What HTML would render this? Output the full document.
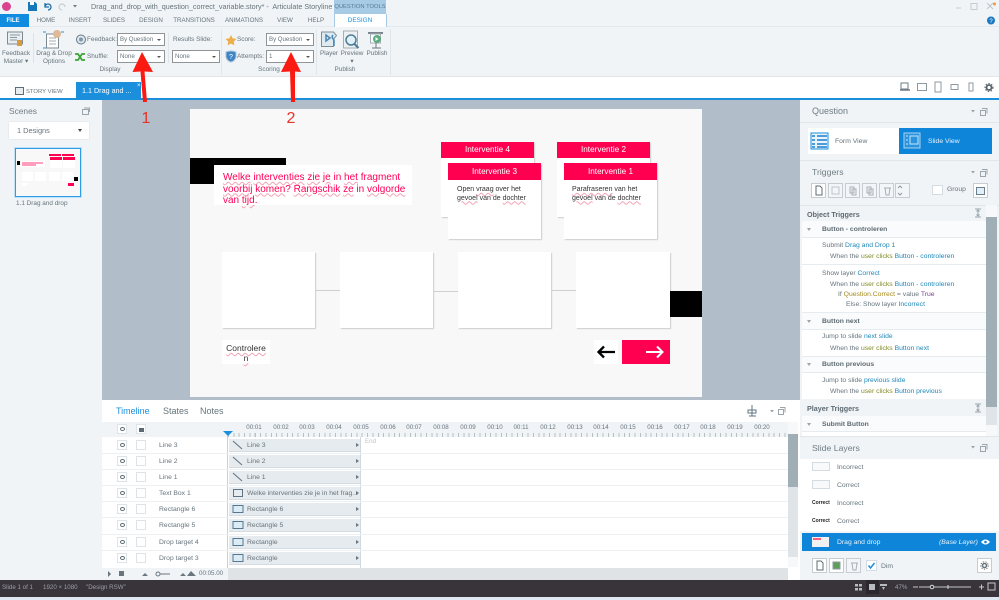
<!DOCTYPE html>
<html><head><meta charset="utf-8"><title>Storyline</title>
<style>
html,body{margin:0;padding:0;width:999px;height:600px;overflow:hidden;background:#fff}
#r{position:relative;width:999px;height:600px;overflow:hidden;font-family:"Liberation Sans",sans-serif;color:#66747c;filter:blur(.3px)}
#r div,#r span.a,#r svg{position:absolute}
.t{position:absolute;white-space:nowrap;line-height:10px;height:10px;font-size:6.8px}
.t:not([style*="font-size"]){margin-top:1px}
.c{transform:translateX(-50%)}
#r .h{font-size:8.7px;color:#6f7d85;margin-top:0}
.b{font-weight:bold;color:#5d6a72}
.dd{background:#fff;border:1px solid #8f9497;box-sizing:border-box;height:13px;width:48px}
.dd:after{content:"";position:absolute;right:3px;top:5px;border:2px solid transparent;border-top:2.5px solid #555}
i{font-style:normal;color:#1e88b8}
u{text-decoration:none;color:#7f8a22}
.card{background:#fff;box-shadow:1px 1px 1px #ccc;width:93px}
.pk{background:#ff0050;color:#fff;font-size:8.2px;text-align:center;height:16px;line-height:16px}
.dt{background:#fff;box-shadow:1px 1px 1px #ccc;top:252px;height:76px;width:93px}
.sq{text-decoration:underline wavy #f2a3b4;text-decoration-thickness:.5px;text-underline-offset:1px}
.ln{background:#e6ebef;height:1px;left:802px;width:184px}
.eye{left:117px;width:10px;height:10px;background:#fff;border:1px solid #dde3e7;box-sizing:border-box}
.eye:after{content:"";position:absolute;left:1.5px;top:2px;width:3px;height:2px;border:1.2px solid #5b6a72;border-radius:50%}
.lk{left:136px;width:10px;height:10px;background:#fff;border:1px solid #dde3e7;box-sizing:border-box}
.bar{left:229px;width:131px;height:13px;background:#e6ebef;border-bottom:1px solid #d5dce1;box-sizing:border-box}
.rl{left:102px;width:686px;height:1px;background:#eef1f3}
.tb{width:15px;height:15px;background:#f3f6f8;border:1px solid #c6ccd0;box-sizing:border-box;top:183px}
.sp{background:#f0f4f7}
</style></head><body><div id="r">

<!-- title bar + ribbon -->
<div style="left:0;top:0;width:999px;height:76px;background:#f0f4f7"></div>
<div style="left:0;top:26px;width:999px;height:1px;background:#e4e9ed"></div>
<div style="left:0;top:76px;width:999px;height:1px;background:#e1e6ea"></div>
<div style="left:0;top:77px;width:999px;height:21px;background:#fff"></div>
<div style="left:0;top:98px;width:999px;height:2px;background:#1b8fdb"></div>

<div style="left:2px;top:2px;width:9px;height:9px;border-radius:50%;background:#d9438f"></div>
<svg style="left:27px;top:1px" width="50" height="11" viewBox="0 0 50 11"><path d="M1 1h7l2 2v7H1z" fill="#1877b8"/><rect x="3" y="1" width="4" height="3" fill="#fff"/><path d="M18 6a3 3 0 1 1 3 3M18 2v4h4" fill="none" stroke="#1d6fa8" stroke-width="1.3"/><path d="M38 6a3 3 0 1 0-3 3" fill="none" stroke="#c4ccd2" stroke-width="1.2"/><path d="M46 4h4l-2 2.5z" fill="#777"/></svg>
<div class="t" style="left:91px;top:2px;font-size:7.2px">Drag_and_drop_with_question_correct_variable.story* -&nbsp; Articulate Storyline&nbsp; <span style="color:#d9438f">x64</span></div>
<div style="left:334px;top:0;width:52px;height:14px;background:#a8cbe5"></div>
<div class="t c" style="left:360px;top:2px;font-size:5.800px;color:#557a96">QUESTION TOOLS</div>
<div style="left:334px;top:14px;width:51px;height:13px;background:#fff;border:solid #a8cbe5;border-width:0 1px;"></div>
<div class="t c" style="left:360px;top:16px;color:#1b8fdb;font-size:6.4px">DESIGN</div>
<div style="left:0;top:14px;width:29px;height:13px;background:#0f8ce0"></div>
<div class="t c" style="left:13px;top:16px;color:#fff;font-weight:bold;font-size:6px">FILE</div>
<div class="t c" style="left:46px;top:16px;font-size:6.2px">HOME</div>
<div class="t c" style="left:80px;top:16px;font-size:6.2px">INSERT</div>
<div class="t c" style="left:114px;top:16px;font-size:6.2px">SLIDES</div>
<div class="t c" style="left:151px;top:16px;font-size:6.2px">DESIGN</div>
<div class="t c" style="left:194px;top:16px;font-size:6.2px">TRANSITIONS</div>
<div class="t c" style="left:244px;top:16px;font-size:6.2px">ANIMATIONS</div>
<div class="t c" style="left:285px;top:16px;font-size:6.2px">VIEW</div>
<div class="t c" style="left:316px;top:16px;font-size:6.2px">HELP</div>

<!-- window controls -->
<svg style="left:950px;top:0" width="49" height="28" viewBox="0 0 49 28"><path d="M6 8h5" stroke="#c4ccd2"/><rect x="21" y="3.5" width="6" height="6" fill="none" stroke="#c4ccd2"/><path d="M37 3l6 6M43 3l-6 6" stroke="#bcc5cb"/><circle cx="44.500" cy="4" r="1.500" fill="#f29a38"/><circle cx="41" cy="20.500" r="4" fill="#1c77c4"/><text x="41" y="23" font-size="6" fill="#fff" text-anchor="middle" font-family="Liberation Sans">?</text></svg>

<!-- ribbon groups -->
<svg style="left:5px;top:29px" width="385" height="22" viewBox="0 0 385 22">
<rect x="2.500" y="3" width="15" height="12" fill="#e8edf0" stroke="#7d8a92"/><path d="M5 6h10M5 8.500h7M5 11h7" stroke="#8b99a2"/><rect x="12" y="11" width="5" height="6" fill="#d89a3a"/>
<rect x="41.500" y="5" width="12" height="14" fill="#fff" stroke="#7d8a92"/><path d="M44 9h7M44 12h7M44 15h7" stroke="#a2adb4"/><circle cx="52" cy="5" r="4" fill="#e0b996"/><path d="M38 3h3M56 3h3M38 19h3" stroke="#2f8fd8"/>
<circle cx="76" cy="10.500" r="3.500" fill="#dde5ea" stroke="#607a8c"/>
<path d="M226 6l1.700 3.400 3.800.5-2.700 2.700.6 3.800-3.400-1.800-3.400 1.800.6-3.800-2.700-2.700 3.800-.5z" fill="#eeae4a"/>
<path d="M316.500 3h12l3 3.500-3 4v7h-12z" fill="#dfe9f0" stroke="#7e8e98"/><path d="M321 6l4 3-4 3zM328 6c-2 2 0 4 1 5v6" fill="none" stroke="#4a87b4" stroke-width="1.500"/>
<rect x="338.500" y="2" width="14" height="17" fill="#eef1f3" stroke="#a3aeb5"/><circle cx="346" cy="11" r="5" fill="#dff0f8" stroke="#4f7c96" stroke-width="1.500"/><path d="M349.500 15l4 4" stroke="#4f7c96" stroke-width="2"/>
<rect x="363" y="3" width="15" height="2" fill="#7b868c"/><rect x="365.500" y="5" width="10" height="9" fill="#fff" stroke="#a3aeb5"/><circle cx="372" cy="10" r="4" fill="#5bab7c"/><path d="M370.500 8l3 2-3 2z" fill="#fff"/><path d="M367 19h9M371 14v5" stroke="#6d787f"/>
</svg>
<svg style="left:74px;top:33px" width="12" height="30" viewBox="0 0 12 30"><circle cx="7" cy="6.500" r="4.500" fill="#dfe7ec" stroke="#607a8c"/><circle cx="7" cy="6.500" r="2" fill="#7f97a7"/><path d="M1 21l3 0 4 6 3 0M1 27l3 0 4-6 3 0" fill="none" stroke="#3da437" stroke-width="1.800"/></svg>
<svg style="left:225px;top:50px" width="13" height="13" viewBox="0 0 13 13"><path d="M1 2q5-2 10 0v5q-1 4-5 5q-4-1-5-5z" fill="#3f84c4" stroke="#a9c4dc"/><text x="6" y="9" font-size="7" fill="#fff" text-anchor="middle" font-family="Liberation Sans">?</text></svg>
<div class="t c" style="left:16px;top:49px;font-size:6.4px">Feedback</div>
<div class="t c" style="left:16px;top:57px;font-size:6.4px">Master ▾</div>
<div style="left:33px;top:33px;width:1px;height:30px;background:#dde3e7"></div>
<div class="t c" style="left:54px;top:49px;font-size:6.4px">Drag &amp; Drop</div>
<div class="t c" style="left:54px;top:57px;font-size:6.4px">Options</div>
<div class="t" style="left:87px;top:35px;font-size:6.4px">Feedback:</div>
<div class="t" style="left:87px;top:52px;font-size:6.4px">Shuffle:</div>
<div class="dd t" style="left:117px;top:33px;padding-left:2px;font-size:6.1px;height:13px;line-height:11px">By Question</div>
<div class="dd t" style="left:117px;top:50px;padding-left:2px;font-size:6.2px;height:13px;line-height:11px">None</div>
<div style="left:168px;top:33px;width:1px;height:30px;background:#e1e6ea"></div>
<div class="t" style="left:173px;top:35px;font-size:6.4px">Results Slide:</div>
<div class="dd t" style="left:172px;top:50px;padding-left:2px;font-size:6.2px;height:13px;line-height:11px">None</div>
<div class="t c" style="left:110px;top:65px;font-size:6.4px">Display</div>
<div style="left:221px;top:29px;width:1px;height:46px;background:#e1e6ea"></div>
<div class="t" style="left:237px;top:35px;font-size:6.4px">Score:</div>
<div class="t" style="left:237px;top:52px;font-size:6.4px">Attempts:</div>
<div class="dd t" style="left:266px;top:33px;padding-left:2px;font-size:6.1px;height:13px;line-height:11px">By Question</div>
<div class="dd t" style="left:266px;top:50px;padding-left:2px;font-size:6.2px;height:13px;line-height:11px">1</div>
<div class="t c" style="left:269px;top:65px;font-size:6.4px">Scoring</div>
<div style="left:316px;top:29px;width:1px;height:46px;background:#e1e6ea"></div>
<div class="t c" style="left:329px;top:49px;font-size:6.4px">Player</div>
<div class="t c" style="left:352px;top:49px;font-size:6.4px">Preview</div>
<div class="t c" style="left:352px;top:57px;font-size:6.4px">▾</div>
<div class="t c" style="left:377px;top:49px;font-size:6.4px">Publish</div>
<div class="t c" style="left:345px;top:65px;font-size:6.4px">Publish</div>
<div style="left:390px;top:29px;width:1px;height:46px;background:#e1e6ea"></div>

<!-- view tabs -->
<div style="left:15px;top:87px;width:9px;height:8px;background:#e8edf0;border:1px solid #5e6c75;box-sizing:border-box"></div>
<div class="t" style="left:26px;top:87px;font-size:5.900px">STORY VIEW</div>
<div style="left:76px;top:82px;width:65px;height:17px;background:#1b8fdb"></div>
<div class="t" style="left:82px;top:86px;color:#fff;font-size:7.200px">1.1 Drag and ...</div>
<div class="t" style="left:137px;top:81px;color:#fff;font-size:6px">×</div>
<svg style="left:898px;top:81px" width="100" height="13" viewBox="0 0 100 13"><rect x="3" y="2" width="7" height="6" fill="none" stroke="#6f7c85"/><path d="M2 9h10" stroke="#6f7c85" stroke-width="1.500"/><rect x="19.500" y="2.500" width="9" height="7" fill="none" stroke="#8d99a1"/><rect x="37" y="1" width="6" height="10" fill="none" stroke="#8d99a1"/><rect x="53" y="3.500" width="7" height="5" fill="none" stroke="#8d99a1"/><rect x="71" y="2" width="4" height="8" fill="none" stroke="#8d99a1"/><circle cx="91" cy="6.500" r="2.500" fill="none" stroke="#55636c" stroke-width="1.800"/><circle cx="91" cy="6.500" r="4" fill="none" stroke="#55636c" stroke-dasharray="1.500 1.500"/></svg>

<!-- left panel -->
<div style="left:0;top:100px;width:102px;height:480px;background:#f0f4f7"></div>
<div class="t h" style="left:9px;top:106px;font-size:8.4px">Scenes</div>
<svg style="left:82px;top:107px" width="8" height="8" viewBox="0 0 8 8"><rect x=".5" y="2.500" width="6" height="5" fill="none" stroke="#9aa5ad"/><path d="M2 1h5.500v4" fill="none" stroke="#9aa5ad"/></svg>
<div style="left:9px;top:122px;width:80px;height:17px;background:#fff;box-shadow:0 0 1px #c6ccd0"></div>
<div class="t" style="left:17px;top:126px;font-size:7.400px">1 Designs</div>
<div style="left:78px;top:129px;border:2.500px solid transparent;border-top:3px solid #444"></div>
<div style="left:16px;top:149px;width:64px;height:47px;background:#f8f8f8;outline:1px solid #2d9ee6;box-shadow:0 0 0 2px #bfe0f6"></div>
<svg style="left:17px;top:150px" width="62" height="45" viewBox="0 0 62 45"><rect y="11" width="3" height="4" fill="#000"/><rect x="4" y="11" width="24" height="6" fill="#fff"/><path d="M5 13h21M5 15h14" stroke="#ff0050" stroke-width=".8"/><rect x="32" y="4" width="12" height="2" fill="#ff0050"/><rect x="45" y="4" width="12" height="2" fill="#ff0050"/><rect x="33" y="7" width="12" height="3" fill="#ff0050"/><rect x="46" y="7" width="12" height="3" fill="#ff0050"/><rect x="33" y="10" width="12" height="8" fill="#fff"/><rect x="46" y="10" width="12" height="8" fill="#fff"/><rect x="5" y="22" width="11" height="9" fill="#fff"/><rect x="18" y="22" width="11" height="9" fill="#fff"/><rect x="32" y="22" width="11" height="9" fill="#fff"/><rect x="45" y="22" width="11" height="9" fill="#fff"/><rect x="57" y="27" width="4" height="4" fill="#000"/><rect x="51" y="33" width="6" height="3" fill="#ff0050"/><rect x="5" y="33" width="5" height="3" fill="#fff"/></svg>
<div class="t" style="left:16px;top:199px;font-size:6.4px">1.1 Drag and drop</div>

<!-- canvas -->
<div style="left:102px;top:100px;width:698px;height:300px;background:#b1bec9"></div>
<div style="left:190px;top:109px;width:512px;height:288px;background:#f8f8f8"></div>
<div style="left:190px;top:158px;width:96px;height:26px;background:#000"></div>
<div style="left:214px;top:165px;width:198px;height:40px;background:#fff"></div>
<div class="t" style="left:223px;top:172px;font-size:10px;line-height:11.500px;height:auto;color:#ff0055"><span class="sq">Welke</span> <span class="sq">interventies</span> <span class="sq">zie</span> <span class="sq">je</span> in <span class="sq">het</span> fragment<br><span class="sq">voorbij</span> <span class="sq">komen</span>? <span class="sq">Rangschik</span> <span class="sq">ze</span> in <span class="sq">volgorde</span><br>van <span class="sq">tijd</span>.</div>

<div class="card" style="left:441px;top:142px;height:75px"><div class="pk" style="position:static">Interventie 4</div></div>
<div class="card" style="left:557px;top:142px;height:75px"><div class="pk" style="position:static">Interventie 2</div></div>
<div class="card" style="left:448px;top:163px;height:76px"><div class="pk" style="position:static;height:17px;line-height:17px">Interventie 3</div></div>
<div class="card" style="left:564px;top:163px;height:76px"><div class="pk" style="position:static;height:17px;line-height:17px">Interventie 1</div></div>
<div class="t" style="left:457px;top:186px;height:auto;font-size:7px;line-height:8.500px;color:#333">Open <span class="sq">vraag</span> over het<br><span class="sq">gevoel</span> van de <span class="sq">dochter</span></div>
<div class="t" style="left:572px;top:186px;height:auto;font-size:7px;line-height:8.500px;color:#333"><span class="sq">Parafraseren</span> van het<br><span class="sq">gevoel</span> van de <span class="sq">dochter</span></div>

<div style="left:316px;top:290px;width:24px;height:1px;background:#cfcfcf"></div>
<div style="left:434px;top:291px;width:24px;height:1px;background:#cfcfcf"></div>
<div style="left:552px;top:290px;width:24px;height:1px;background:#cfcfcf"></div>
<div class="dt" style="left:222px"></div>
<div class="dt" style="left:340px"></div>
<div class="dt" style="left:458px"></div>
<div class="dt" style="left:576px;width:94px"></div>
<div style="left:670px;top:291px;width:32px;height:26px;background:#000"></div>

<div style="left:222px;top:340px;width:48px;height:24px;background:#fff"></div>
<div class="t sq c" style="left:246px;top:343px;font-size:8.500px;line-height:10px;height:auto;text-align:center;color:#333">Controlere<br>n</div>
<div style="left:594px;top:340px;width:24px;height:24px;background:#fff"></div>
<div style="left:622px;top:340px;width:48px;height:24px;background:#ff0050"></div>
<svg style="left:596px;top:343px" width="72" height="18" viewBox="0 0 72 18"><path d="M19 9H3M8 3.500L2.500 9 8 14.500" fill="none" stroke="#000" stroke-width="2.300"/><path d="M50 9h16M61 3.500L66.500 9 61 14.500" fill="none" stroke="#fff" stroke-width="2"/></svg>

<!-- timeline -->
<div style="left:102px;top:400px;width:698px;height:180px;background:#fff"></div>
<div class="t" style="left:116px;top:406px;font-size:9px;color:#1b8fdb">Timeline</div>
<div class="t" style="left:163px;top:406px;font-size:9px">States</div>
<div class="t" style="left:200px;top:406px;font-size:9px">Notes</div>
<svg style="left:746px;top:404px" width="40" height="14" viewBox="0 0 40 14"><path d="M6 1v11M2 6h8v3H2zM3 12h7" stroke="#5f7483" fill="none"/><path d="M24 6h4l-2 2.500z" fill="#9aa5ad"/><rect x="32.500" y="5.500" width="5" height="5" fill="none" stroke="#9aa5ad"/><path d="M34 3.500h5v5" fill="none" stroke="#9aa5ad"/></svg>
<div style="left:102px;top:422px;width:686px;height:15px;background:#f0f4f7"></div>
<div style="left:228px;top:433px;width:560px;height:4px;background:repeating-linear-gradient(90deg,#b6c0c6 0,#b6c0c6 1px,transparent 1px,transparent 5.35px)"></div>
<div class="eye" style="top:424px"></div><div class="lk" style="top:424px"></div>
<div style="left:139px;top:428px;width:5px;height:4px;background:#5b6a72"></div>
<div style="left:223px;top:431px;border:5px solid transparent;border-top:5px solid #1b8fdb;border-bottom:0"></div>
<div style="left:227px;top:436px;width:1px;height:132px;background:#c5d0d8"></div>
<div style="left:360px;top:437px;width:1px;height:131px;background:#cfd8de"></div>

<div class="t c" style="left:254px;top:423px;font-size:6.200px">00:01</div><div class="t c" style="left:281px;top:423px;font-size:6.200px">00:02</div><div class="t c" style="left:307px;top:423px;font-size:6.200px">00:03</div><div class="t c" style="left:334px;top:423px;font-size:6.200px">00:04</div><div class="t c" style="left:361px;top:423px;font-size:6.200px">00:05</div><div class="t c" style="left:388px;top:423px;font-size:6.200px">00:06</div><div class="t c" style="left:414px;top:423px;font-size:6.200px">00:07</div><div class="t c" style="left:441px;top:423px;font-size:6.200px">00:08</div><div class="t c" style="left:468px;top:423px;font-size:6.200px">00:09</div><div class="t c" style="left:495px;top:423px;font-size:6.200px">00:10</div><div class="t c" style="left:521px;top:423px;font-size:6.200px">00:11</div><div class="t c" style="left:548px;top:423px;font-size:6.200px">00:12</div><div class="t c" style="left:575px;top:423px;font-size:6.200px">00:13</div><div class="t c" style="left:601px;top:423px;font-size:6.200px">00:14</div><div class="t c" style="left:628px;top:423px;font-size:6.200px">00:15</div><div class="t c" style="left:655px;top:423px;font-size:6.200px">00:16</div><div class="t c" style="left:682px;top:423px;font-size:6.200px">00:17</div><div class="t c" style="left:708px;top:423px;font-size:6.200px">00:18</div><div class="t c" style="left:735px;top:423px;font-size:6.200px">00:19</div><div class="t c" style="left:762px;top:423px;font-size:6.200px">00:20</div>
<div class="t" style="left:365px;top:437px;font-size:6.200px;color:#bcc5cb">End</div>

<div class="rl" style="top:453px"></div><div class="rl" style="top:469px"></div><div class="rl" style="top:485px"></div><div class="rl" style="top:501px"></div><div class="rl" style="top:517px"></div><div class="rl" style="top:534px"></div><div class="rl" style="top:550px"></div>

<div class="eye" style="top:440px"></div><div class="lk" style="top:440px"></div><div class="t" style="left:159px;top:440px">Line 3</div>
<div class="eye" style="top:456px"></div><div class="lk" style="top:456px"></div><div class="t" style="left:159px;top:456px">Line 2</div>
<div class="eye" style="top:472px"></div><div class="lk" style="top:472px"></div><div class="t" style="left:159px;top:472px">Line 1</div>
<div class="eye" style="top:488px"></div><div class="lk" style="top:488px"></div><div class="t" style="left:159px;top:488px">Text Box 1</div>
<div class="eye" style="top:504px"></div><div class="lk" style="top:504px"></div><div class="t" style="left:159px;top:504px">Rectangle 6</div>
<div class="eye" style="top:520px"></div><div class="lk" style="top:520px"></div><div class="t" style="left:159px;top:520px">Rectangle 5</div>
<div class="eye" style="top:537px"></div><div class="lk" style="top:537px"></div><div class="t" style="left:159px;top:537px">Drop target 4</div>
<div class="eye" style="top:553px"></div><div class="lk" style="top:553px"></div><div class="t" style="left:159px;top:553px">Drop target 3</div>

<div class="bar" style="top:439px"></div><div class="t" style="left:247px;top:440px">Line 3</div>
<div class="bar" style="top:455px"></div><div class="t" style="left:247px;top:456px">Line 2</div>
<div class="bar" style="top:471px"></div><div class="t" style="left:247px;top:472px">Line 1</div>
<div class="bar" style="top:487px"></div><div class="t" style="left:247px;top:488px">Welke interventies zie je in het frag...</div>
<div class="bar" style="top:503px"></div><div class="t" style="left:247px;top:504px">Rectangle 6</div>
<div class="bar" style="top:519px"></div><div class="t" style="left:247px;top:520px">Rectangle 5</div>
<div class="bar" style="top:536px"></div><div class="t" style="left:247px;top:537px">Rectangle</div>
<div class="bar" style="top:552px"></div><div class="t" style="left:247px;top:553px">Rectangle</div>
<svg style="left:231px;top:439px" width="130" height="130" viewBox="0 0 130 130"><g fill="none" stroke="#5f7483"><path d="M2 2l9 8M2 18l9 8M2 34l9 8"/><rect x="2.500" y="50.500" width="9" height="7"/></g><g fill="#dcecf6" stroke="#54788f"><rect x="2" y="66.500" width="10" height="7"/><rect x="2" y="82.500" width="10" height="7"/><rect x="2" y="99.500" width="10" height="7"/><rect x="2" y="115.500" width="10" height="7"/></g><path d="M125 4l3 2-3 2zM125 20l3 2-3 2zM125 36l3 2-3 2zM125 52l3 2-3 2zM125 68l3 2-3 2zM125 84l3 2-3 2zM125 101l3 2-3 2zM125 117l3 2-3 2z" fill="#6a767e"/></svg>

<div style="left:102px;top:568px;width:686px;height:12px;background:#f0f4f7"></div>
<div style="left:228px;top:568px;width:560px;height:12px;background:#dfe3e6"></div>
<svg style="left:106px;top:569px" width="120" height="10" viewBox="0 0 120 10"><path d="M2 2l3 3-3 3z" fill="#6a767e"/><rect x="13" y="2" width="5" height="5" fill="#6a767e"/><path d="M36 7l3-3 3 3zM74 7l3-3 3 3zM81 7l4-5 5 5z" fill="#6a767e"/><circle cx="52" cy="5" r="2" fill="none" stroke="#6a767e"/><path d="M54 5h10" stroke="#6a767e"/></svg>
<div class="t" style="left:199px;top:569px;font-size:6.200px">00:05.00</div>
<div style="left:788px;top:422px;width:10px;height:145px;background:#dfe4e8"></div>
<div style="left:788px;top:422px;width:10px;height:12px;background:#f6f8f9"></div>
<div style="left:788px;top:434px;width:10px;height:53px;background:#a0aeb6"></div>
<div style="left:788px;top:557px;width:10px;height:10px;background:#f6f8f9"></div>

<!-- right panel -->
<div style="left:800px;top:100px;width:199px;height:480px;background:#f0f4f7"></div>
<div class="t h" style="left:812px;top:106px;font-size:9px">Question</div>
<svg style="left:970px;top:107px" width="18" height="9" viewBox="0 0 18 9"><path d="M1 3h4L3 5.500z" fill="#9aa5ad"/><rect x="10.500" y="3.500" width="5" height="5" fill="none" stroke="#9aa5ad"/><path d="M12 1.500h5v5" fill="none" stroke="#9aa5ad"/></svg>
<div style="left:800px;top:122px;width:199px;height:1px;background:#e1e6ea"></div>
<div style="left:808px;top:128px;width:91px;height:26px;background:#fff"></div>
<div style="left:899px;top:128px;width:93px;height:26px;background:#0f85da"></div>
<svg style="left:809px;top:132px" width="20" height="19" viewBox="0 0 20 19"><rect x="2" y="1" width="17" height="16" fill="#e8f3fb" stroke="#1b8fdb"/><path d="M3 4h3M8 4h10M3 8h3M8 8h10M3 12h3M8 12h10M3 15h3M8 15h10" stroke="#1780cc" stroke-width="1.500"/></svg>
<div class="t" style="left:835px;top:136px">Form View</div>
<svg style="left:902px;top:131px" width="20" height="19" viewBox="0 0 20 19"><rect x="2" y="2" width="16" height="15" fill="#2c94df" stroke="#a7d3f1"/><rect x="8" y="5" width="8" height="8" fill="none" stroke="#c9e3f6"/><path d="M4 5h2M4 9h2M4 13h2" stroke="#c9e3f6"/></svg>
<div class="t" style="left:928px;top:136px;color:#e6f3fc">Slide View</div>

<div style="left:800px;top:160px;width:199px;height:1px;background:#e1e6ea"></div>
<div class="t h" style="left:812px;top:167px">Triggers</div>
<svg style="left:970px;top:168px" width="18" height="9" viewBox="0 0 18 9"><path d="M1 3h4L3 5.500z" fill="#9aa5ad"/><rect x="10.500" y="3.500" width="5" height="5" fill="none" stroke="#9aa5ad"/><path d="M12 1.500h5v5" fill="none" stroke="#9aa5ad"/></svg>
<div class="tb" style="left:811px;background:#fff"></div><div class="tb" style="left:828px"></div><div class="tb" style="left:845px"></div><div class="tb" style="left:862px"></div><div class="tb" style="left:879px"></div><div class="tb" style="left:895px"></div>
<svg style="left:811px;top:183px" width="100" height="15" viewBox="0 0 100 15"><path d="M5 3h4l2 2v7H5z" fill="#fff" stroke="#5f6d75"/><path d="M21 4h7v7h-7z" fill="none" stroke="#bcc5cb"/><path d="M39 4h4v6h-4zM41 6h4v6h-4z" fill="#f3f6f8" stroke="#a7b0b6"/><path d="M56 4h4v6h-4zM58 6h4v6h-4z" fill="#f3f6f8" stroke="#a7b0b6"/><path d="M73 5h7M74 5l1 7h3l1-7" fill="none" stroke="#a7b0b6"/><path d="M87 5l2-2 2 2M87 10l2 2 2-2" fill="none" stroke="#8d99a1"/></svg>
<div style="left:932px;top:185px;width:11px;height:10px;background:#fff;border:1px solid #d5dce1;box-sizing:border-box"></div>
<div class="t" style="left:947px;top:184px">Group</div>
<div style="left:973px;top:183px;width:15px;height:15px;background:#fff;border:1px solid #c6ccd0;box-sizing:border-box"></div>
<div style="left:976px;top:187px;width:9px;height:8px;background:#e3eff8;border:1px solid #6a808f;box-sizing:border-box"></div>

<div style="left:800px;top:205px;width:199px;height:1px;background:#e1e6ea"></div>
<div style="left:802px;top:221px;width:184px;height:215px;background:#fff"></div>
<div class="t b" style="left:807px;top:210px;font-size:7.200px">Object Triggers</div>
<svg style="left:972px;top:208px" width="12" height="10" viewBox="0 0 12 10"><path d="M3 1h6M3 9h6M6 2v6M4.500 3.500L6 2l1.500 1.500M4.500 6.500L6 8l1.500-1.500" fill="none" stroke="#9aa5ad"/></svg>

<div class="ln" style="top:237px"></div><div class="ln" style="top:264px"></div><div class="ln" style="top:312px"></div><div class="ln" style="top:329px"></div><div class="ln" style="top:356px"></div><div class="ln" style="top:372px"></div><div class="ln" style="top:431px"></div>
<div style="left:802px;top:221px;width:184px;height:16px;background:#fafbfc"></div>
<div style="left:802px;top:313px;width:184px;height:16px;background:#fafbfc"></div>
<div style="left:802px;top:357px;width:184px;height:15px;background:#fafbfc"></div>
<div style="left:802px;top:416px;width:184px;height:15px;background:#fafbfc"></div>
<div style="left:802px;top:399px;width:184px;height:17px;background:#f0f4f7"></div>
<svg style="left:806px;top:226px" width="8" height="205" viewBox="0 0 8 205"><path d="M1 2h4L3 5zM1 94h4L3 97zM1 137h4L3 140zM1 197h4L3 200z" fill="#9aa5ad"/></svg>

<div class="t b" style="left:822px;top:224px">Button - controleren</div>
<div class="t" style="left:822px;top:240px">Submit <i>Drag and Drop 1</i></div>
<div class="t" style="left:830px;top:251px">When the <u>user clicks</u> <i>Button - controleren</i></div>
<div class="t" style="left:822px;top:268px">Show layer <i>Correct</i></div>
<div class="t" style="left:830px;top:279px">When the <u>user clicks</u> <i>Button - controleren</i></div>
<div class="t" style="left:838px;top:289px">If <u style="color:#a68a1e">Question.Correct</u> = value <span style="color:#7b3f8f">True</span></div>
<div class="t" style="left:846px;top:299px">Else: Show layer <i>Incorrect</i></div>
<div class="t b" style="left:822px;top:316px">Button next</div>
<div class="t" style="left:822px;top:331px">Jump to slide <i>next slide</i></div>
<div class="t" style="left:830px;top:343px">When the <u>user clicks</u> <i>Button next</i></div>
<div class="t b" style="left:822px;top:359px">Button previous</div>
<div class="t" style="left:822px;top:375px">Jump to slide <i>previous slide</i></div>
<div class="t" style="left:830px;top:386px">When the <u>user clicks</u> <i>Button previous</i></div>
<div class="t b" style="left:807px;top:404px;font-size:7.200px">Player Triggers</div>
<svg style="left:972px;top:403px" width="12" height="10" viewBox="0 0 12 10"><path d="M3 1h6M3 9h6M6 2v6M4.500 3.500L6 2l1.500 1.500M4.500 6.500L6 8l1.500-1.500" fill="none" stroke="#9aa5ad"/></svg>
<div class="t b" style="left:822px;top:419px">Submit Button</div>

<div style="left:986px;top:205px;width:11px;height:231px;background:#dfe4e8"></div>
<div style="left:986px;top:205px;width:11px;height:12px;background:#f6f8f9"></div>
<div style="left:986px;top:217px;width:11px;height:190px;background:#a0aeb6"></div>
<div style="left:986px;top:425px;width:11px;height:11px;background:#f6f8f9"></div>

<div style="left:800px;top:436px;width:199px;height:1px;background:#e1e6ea"></div>
<div class="t h" style="left:812px;top:443px">Slide Layers</div>
<svg style="left:970px;top:443px" width="18" height="9" viewBox="0 0 18 9"><path d="M1 3h4L3 5.500z" fill="#9aa5ad"/><rect x="10.500" y="3.500" width="5" height="5" fill="none" stroke="#9aa5ad"/><path d="M12 1.500h5v5" fill="none" stroke="#9aa5ad"/></svg>
<div style="left:800px;top:459px;width:199px;height:72px;background:#fff"></div>
<div style="left:812px;top:462px;width:18px;height:9px;background:#f8f9fa;border:1px solid #d5dce1;box-sizing:border-box"></div>
<div style="left:812px;top:480px;width:18px;height:9px;background:#f8f9fa;border:1px solid #d5dce1;box-sizing:border-box"></div>
<div class="t" style="left:812px;top:498px;font-size:5px;font-weight:bold;color:#222">Correct</div>
<div class="t" style="left:812px;top:516px;font-size:5px;font-weight:bold;color:#222">Correct</div>
<div class="t" style="left:837px;top:462px">Incorrect</div>
<div class="t" style="left:837px;top:480px">Correct</div>
<div class="t" style="left:837px;top:498px">Incorrect</div>
<div class="t" style="left:837px;top:516px">Correct</div>
<div style="left:802px;top:533px;width:194px;height:18px;background:#0f85da"></div>
<div style="left:812px;top:537px;width:17px;height:10px;background:#f1f1f1"></div>
<div style="left:813px;top:538px;width:8px;height:2px;background:#ff5a80"></div>
<div class="t" style="left:837px;top:537px;color:#e6f3fc">Drag and drop</div>
<div class="t" style="left:939px;top:537px;color:#e6f3fc;font-style:italic">(Base Layer)</div>
<svg style="left:981px;top:538px" width="9" height="8" viewBox="0 0 9 8"><path d="M0 4q4.500-5 9 0q-4.500 5-9 0z" fill="#fff"/><circle cx="4.500" cy="4" r="1.300" fill="#0f85da"/></svg>
<div class="tb" style="left:812px;top:558px;background:#fff"></div><div class="tb" style="left:829px;top:558px;background:#fff"></div><div class="tb" style="left:846px;top:558px"></div>
<svg style="left:812px;top:558px" width="50" height="15" viewBox="0 0 50 15"><path d="M5 3h4l2 2v7H5z" fill="#fff" stroke="#5f6d75"/><rect x="21" y="4" width="7" height="7" fill="#5aa05a" stroke="#8d99a1"/><path d="M39 5h7M40 5l1 7h3l1-7" fill="none" stroke="#a7b0b6"/></svg>
<div style="left:866px;top:560px;width:11px;height:11px;background:#fff;border:1px solid #d5dce1;box-sizing:border-box"></div>
<svg style="left:866px;top:560px" width="11" height="11" viewBox="0 0 11 11"><path d="M2.500 5.500l2 2.500 4-5" fill="none" stroke="#1b8fdb" stroke-width="1.500"/></svg>
<div class="t" style="left:881px;top:561px">Dim</div>
<div style="left:977px;top:558px;width:15px;height:15px;background:#fff;border:1px solid #c6ccd0;box-sizing:border-box"></div>
<svg style="left:980px;top:561px" width="9" height="9" viewBox="0 0 9 9"><circle cx="4.500" cy="4.500" r="2" fill="none" stroke="#6a767e" stroke-width="1.500"/><circle cx="4.500" cy="4.500" r="3.700" fill="none" stroke="#6a767e" stroke-dasharray="1.300 1.300"/></svg>

<!-- status bar -->
<div style="left:0;top:580px;width:999px;height:17px;background:#39333a"></div>
<div style="left:0;top:597px;width:999px;height:3px;background:#dfe7f2"></div>
<div class="t" style="left:2px;top:583px;font-size:6.200px;color:#9aa0a6">Slide 1 of 1</div>
<div class="t" style="left:43px;top:583px;font-size:6.200px;color:#9aa0a6">1920 × 1080</div>
<div class="t" style="left:86px;top:583px;font-size:6.200px;color:#9aa0a6">"Design RSW"</div>
<div style="left:866px;top:580px;width:13px;height:14px;background:#2c272d"></div>
<svg style="left:853px;top:582px" width="146" height="11" viewBox="0 0 146 11"><g fill="#b7bcc0"><rect x="2" y="2" width="3" height="2.500"/><rect x="6" y="2" width="3" height="2.500"/><rect x="2" y="6" width="3" height="2.500"/><rect x="6" y="6" width="3" height="2.500"/><rect x="16" y="2" width="6" height="6"/><path d="M27 2h7v2h-7zM29 5h3l-1.500 3z"/></g><path d="M60 5h5M66 5h52M126 5h5M128.500 2.500v5" stroke="#c4c8cb"/><circle cx="79" cy="5" r="1.800" fill="#39333a" stroke="#d5d8da"/><path d="M95 3v4" stroke="#d5d8da"/><rect x="135" y="1" width="7" height="7" fill="none" stroke="#c4c8cb"/></svg>
<div class="t" style="left:895px;top:583px;font-size:6.200px;color:#9aa0a6">47%</div>

<!-- annotations -->
<svg style="left:0;top:0" width="999" height="600" viewBox="0 0 999 600"><path d="M142 52L153 72 144.500 71.500 147 102 143 102 140.500 71.500 132.500 72z" fill="#fb1a12"/><path d="M291 52L301 72 295 71.500 295 102 291 102 290 71.500 281 72z" fill="#fb1a12"/><text x="146" y="123" font-size="16" fill="#e8322a" text-anchor="middle" font-family="Liberation Sans">1</text><text x="291" y="123" font-size="16" fill="#e8322a" text-anchor="middle" font-family="Liberation Sans">2</text></svg>
</div></body></html>
